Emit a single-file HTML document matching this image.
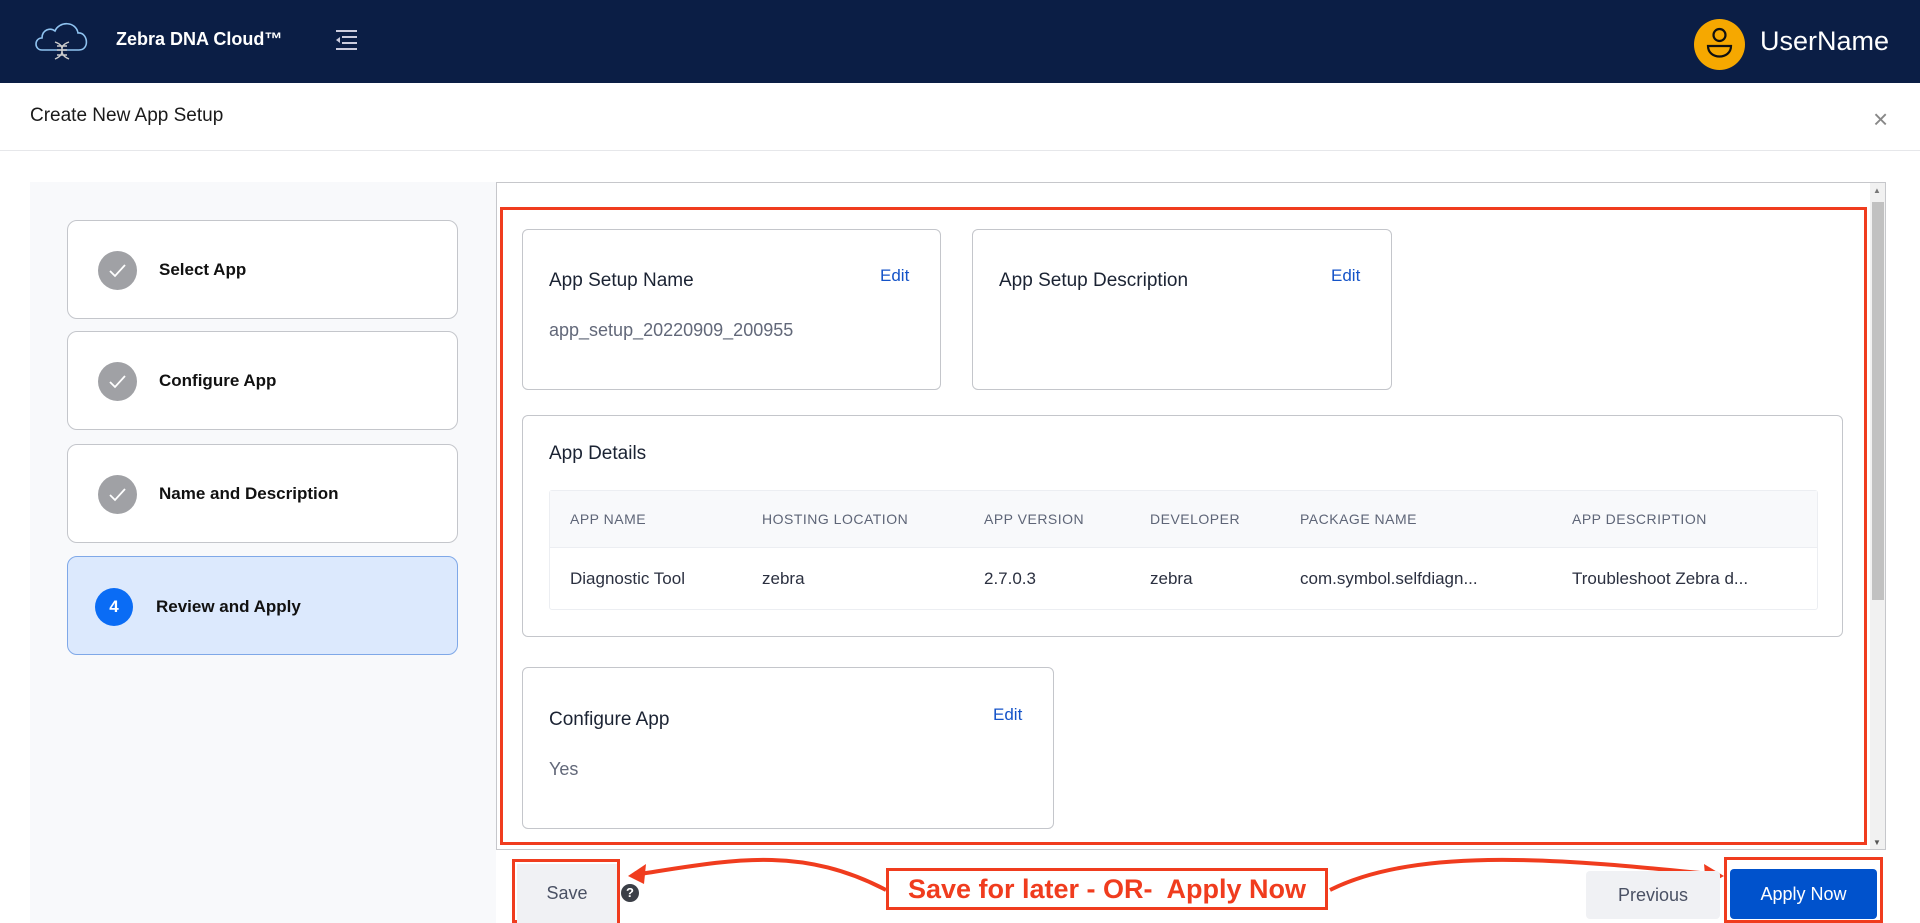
<!DOCTYPE html>
<html><head><meta charset="utf-8"><style>
*{box-sizing:border-box;margin:0;padding:0}
body{width:1920px;height:923px;overflow:hidden;background:#fff;font-family:"Liberation Sans",sans-serif;position:relative;color:#1b2333}
.a{position:absolute}
.hdr{left:0;top:0;width:1920px;height:83px;background:#0b1e45}
.card{position:absolute;background:#fff;border:1px solid #c4c6cb;border-radius:6px}
.step{position:absolute;left:67px;width:391px;height:99px;background:#fff;border:1px solid #c4c6cb;border-radius:10px}
.step .c{position:absolute;left:30px;top:30px;width:39px;height:39px;border-radius:50%;background:#a0a1a5}
.step .t{position:absolute;left:91px;top:39px;font-size:17px;font-weight:bold;color:#111}
.ct{font-size:19px;color:#1b2333}
.edit{font-size:17px;color:#1453c8}
.th{position:absolute;top:20px;font-size:14px;color:#5e6577;letter-spacing:.5px}
.td{position:absolute;top:78px;font-size:17px;color:#2b3040}
</style></head><body>
<div class="a hdr"></div>
<svg class="a" style="left:32px;top:18px" width="60" height="46" viewBox="0 0 60 46"><path d="M10 32 C2 32 2 20 10 20 C10 12 18 9 23 13 C27 3 44 3 46 15 C56 14 58 32 47 32 Z" fill="none" stroke="#8fc3f0" stroke-width="1.6"/><path d="M23 24 C37 29 23 35 37 41 M37 24 C23 29 37 35 23 41 M25 28 H35 M25 32 H35 M25 37 H35" stroke="#ccc" stroke-width="1.4" fill="none"/></svg>
<div class="a" style="left:116px;top:29px;font-size:18px;font-weight:bold;color:#fff">Zebra DNA Cloud™</div>
<svg class="a" style="left:333px;top:28px" width="26" height="24" viewBox="0 0 26 24"><path d="M3 3H24M9 9H24M9 15H24M3 21H24" stroke="#ccd" stroke-width="2"/><path d="M3 12 L7 9 V15Z" fill="#ccd"/></svg>
<div class="a" style="left:1694px;top:19px;width:51px;height:51px;border-radius:50%;background:#f6a800"></div>
<svg class="a" style="left:1694px;top:19px" width="51" height="51" viewBox="0 0 51 51"><circle cx="25.5" cy="16" r="6" fill="none" stroke="#111" stroke-width="2.2"/><path d="M14 27 H37 C37 41 14 41 14 27Z" fill="none" stroke="#111" stroke-width="2.2"/></svg>
<div class="a" style="left:1760px;top:26px;font-size:27px;color:#fff">UserName</div>
<div class="a" style="left:30px;top:105px;font-size:19px;color:#1a1a1a">Create New App Setup</div>
<div class="a" style="left:1873px;top:104px;font-size:26px;color:#888;font-weight:300">×</div>
<div class="a" style="left:0;top:150px;width:1920px;height:1px;background:#e6e7ea"></div>
<div class="a" style="left:30px;top:182px;width:466px;height:741px;background:#f8f9fb"></div>
<div class="step" style="top:220px"><div class="c"></div><svg class="a" style="left:30px;top:30px" width="39" height="39"><path d="M12 20 L17 25 L27 14" stroke="#fff" stroke-width="1.8" fill="none"/></svg><div class="t">Select App</div></div>
<div class="step" style="top:331px"><div class="c"></div><svg class="a" style="left:30px;top:30px" width="39" height="39"><path d="M12 20 L17 25 L27 14" stroke="#fff" stroke-width="1.8" fill="none"/></svg><div class="t">Configure App</div></div>
<div class="step" style="top:444px"><div class="c"></div><svg class="a" style="left:30px;top:30px" width="39" height="39"><path d="M12 20 L17 25 L27 14" stroke="#fff" stroke-width="1.8" fill="none"/></svg><div class="t">Name and Description</div></div>
<div class="step" style="top:556px;background:#dce9fd;border-color:#7fa8e8"><div class="c" style="background:#0a6cf5;left:27px;top:31px;width:38px;height:38px;color:#fff;font-weight:bold;font-size:17px;text-align:center;line-height:38px">4</div><div class="t" style="left:88px;top:40px">Review and Apply</div></div>
<div class="a" style="left:496px;top:182px;width:1390px;height:668px;border:1px solid #c6c7cb;background:#fff"></div>
<div class="a" style="left:1870px;top:183px;width:15px;height:666px;background:#f1f1f1"></div>
<div class="a" style="left:1872px;top:202px;width:12px;height:398px;background:#c1c1c1"></div>
<div class="a" style="left:1873px;top:186px;font-size:8px;color:#777">▲</div>
<div class="a" style="left:1873px;top:838px;font-size:8px;color:#555">▼</div>
<div class="a" style="left:500px;top:207px;width:1367px;height:638px;border:3px solid #f03c1e"></div>
<div class="card" style="left:522px;top:229px;width:419px;height:161px"><div class="a ct" style="left:26px;top:40px">App Setup Name</div><div class="a edit" style="left:357px;top:36px">Edit</div><div class="a" style="left:26px;top:90px;font-size:18px;color:#626879">app_setup_20220909_200955</div></div>
<div class="card" style="left:972px;top:229px;width:420px;height:161px"><div class="a ct" style="left:26px;top:40px">App Setup Description</div><div class="a edit" style="left:358px;top:36px">Edit</div></div>
<div class="card" style="left:522px;top:415px;width:1321px;height:222px"><div class="a ct" style="left:26px;top:27px">App Details</div>
<div class="a" style="left:26px;top:74px;width:1269px;height:120px;border:1px solid #eceef2;border-radius:3px">
<div class="a" style="left:0;top:0;width:1267px;height:57px;background:#f8f9fb;border-bottom:1px solid #eceef2"></div>
<div class="th" style="left:20px">APP NAME</div><div class="th" style="left:212px">HOSTING LOCATION</div><div class="th" style="left:434px">APP VERSION</div><div class="th" style="left:600px">DEVELOPER</div><div class="th" style="left:750px">PACKAGE NAME</div><div class="th" style="left:1022px">APP DESCRIPTION</div>
<div class="td" style="left:20px;top:78px">Diagnostic Tool</div><div class="td" style="left:212px">zebra</div><div class="td" style="left:434px">2.7.0.3</div><div class="td" style="left:600px">zebra</div><div class="td" style="left:750px">com.symbol.selfdiagn...</div><div class="td" style="left:1022px">Troubleshoot Zebra d...</div>
</div></div>
<div class="card" style="left:522px;top:667px;width:532px;height:162px"><div class="a ct" style="left:26px;top:41px">Configure App</div><div class="a edit" style="left:470px;top:37px">Edit</div><div class="a" style="left:26px;top:91px;font-size:18px;color:#626879">Yes</div></div>
<div class="a" style="left:512px;top:859px;width:108px;height:64px;border:3px solid #f03c1e"></div>
<div class="a" style="left:517px;top:864px;width:100px;height:59px;background:#f0f1f4;color:#4a5164;font-size:18px;text-align:center;line-height:58px">Save</div>
<div class="a" style="left:621px;top:884px;width:18px;height:18px;border-radius:50%;background:#3b3f47;color:#fff;font-size:13px;font-weight:bold;text-align:center;line-height:18px">?</div>
<div class="a" style="left:886px;top:868px;width:442px;height:42px;border:3px solid #f03c1e;background:#fff;color:#f03c1e;font-family:'Liberation Sans Narrow','Liberation Sans',sans-serif;font-weight:bold;font-size:27px;text-align:center;line-height:36px">Save for later - OR-&nbsp; Apply Now</div>
<svg class="a" style="left:620px;top:850px" width="1120" height="60" viewBox="0 0 1120 60"><path d="M266 40 C180 -5 110 10 20 24" stroke="#f03c1e" stroke-width="4" fill="none"/><path d="M8 26 L26 14 L24 34Z" fill="#f03c1e"/><path d="M710 40 C800 -5 950 10 1090 24" stroke="#f03c1e" stroke-width="4" fill="none"/><path d="M1104 26 L1084 14 L1086 36Z" fill="#f03c1e"/></svg>
<div class="a" style="left:1586px;top:871px;width:134px;height:48px;background:#f0f1f4;border-radius:4px;color:#4a5164;font-size:18px;text-align:center;line-height:48px">Previous</div>
<div class="a" style="left:1724px;top:857px;width:159px;height:66px;border:3px solid #f03c1e"></div>
<div class="a" style="left:1730px;top:869px;width:147px;height:50px;background:#0052cc;border-radius:4px;color:#fff;font-size:18px;text-align:center;line-height:50px">Apply Now</div>
</body></html>
